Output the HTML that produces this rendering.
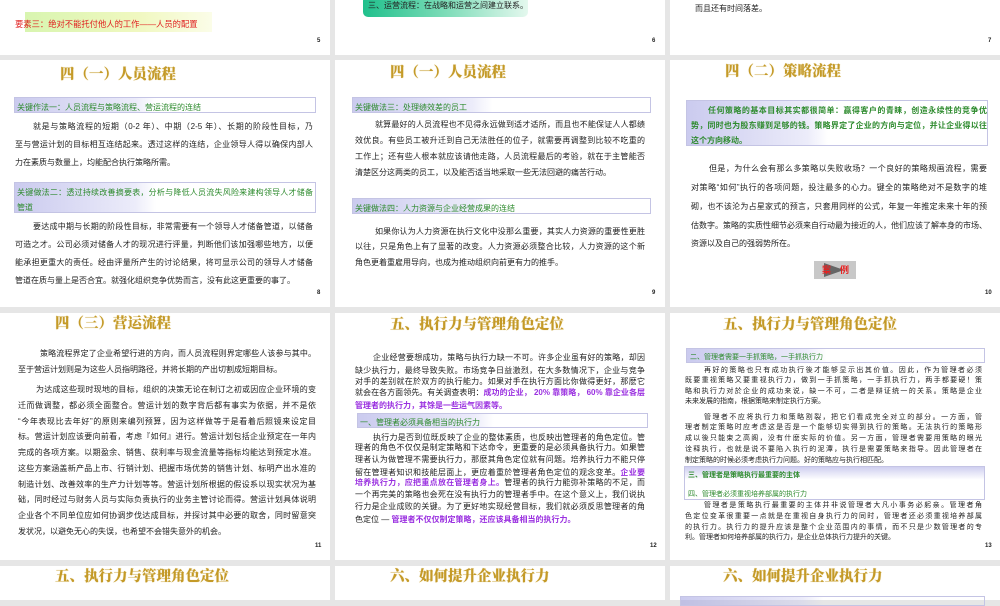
<!DOCTYPE html>
<html><head><meta charset="utf-8">
<style>
*{margin:0;padding:0;box-sizing:border-box}
body{width:1000px;height:600px;overflow:hidden;background:#e6e6e6;position:relative;font-family:"Liberation Sans","Noto Sans CJK SC",sans-serif}
.s{position:absolute;background:#fff}
.t{position:absolute;font-family:"Liberation Serif","Noto Serif CJK SC",serif;font-weight:900;color:#c49a28;font-size:14.5px;line-height:18px;white-space:nowrap;text-shadow:0 0 1px #e8d49a}
.l{position:absolute;font-size:8px;line-height:10px;color:#222;white-space:nowrap;text-align:justify;text-align-last:justify;overflow:hidden}
.e{text-align-last:left}
.sm{font-size:7px}
.g{color:#2e8b2e}
.p{color:#9a30e0}
.box{position:absolute;border:1px solid #c4c4e4;background:linear-gradient(to right,rgba(160,160,225,.55) 0,rgba(200,200,240,.35) 40%,rgba(255,255,255,0) 47%);}
.box2{position:absolute;border:1px solid #c4c4e4;background:linear-gradient(to bottom,rgba(160,160,225,.5),rgba(255,255,255,0) 40%);}
.n{position:absolute;font-size:6px;color:#222;font-weight:bold}
</style></head><body>
<!-- slides -->
<div class="s" style="left:0;top:0;width:330px;height:55px"></div>
<div class="s" style="left:335px;top:0;width:330px;height:55px"></div>
<div class="s" style="left:670px;top:0;width:330px;height:55px"></div>
<div class="s" style="left:0;top:60px;width:330px;height:247px"></div>
<div class="s" style="left:335px;top:60px;width:330px;height:247px"></div>
<div class="s" style="left:670px;top:60px;width:330px;height:247px"></div>
<div class="s" style="left:0;top:313px;width:330px;height:247px"></div>
<div class="s" style="left:335px;top:313px;width:330px;height:247px"></div>
<div class="s" style="left:670px;top:313px;width:330px;height:247px"></div>
<div class="s" style="left:0;top:566px;width:330px;height:34px"></div>
<div class="s" style="left:335px;top:566px;width:330px;height:34px"></div>
<div class="s" style="left:670px;top:566px;width:330px;height:34px"></div>

<!-- row 1 -->
<div style="position:absolute;left:25px;top:12px;width:187px;height:20px;background:linear-gradient(to right,#d8f5b0,#f0f8c0 60%,#fbfde8)"></div>
<div class="l e" style="left:15px;top:19px;color:#e02020;font-size:8.3px">要素三：绝对不能托付他人的工作——人员的配置</div>
<div class="n" style="left:317px;top:38px">5</div>
<div style="position:absolute;left:363px;top:-4px;width:165px;height:21px;border-radius:5px;background:linear-gradient(to right,#20c08c,#7ddcb8 50%,#e4f8ee)"></div>
<div class="l e" style="left:368px;top:1px;color:#222">三、运营流程：在战略和运营之间建立联系。</div>
<div class="n" style="left:652px;top:38px">6</div>
<div class="l e" style="left:695px;top:4px">而且还有时间落差。</div>
<div class="n" style="left:988px;top:38px">7</div>

<!-- slide 8 -->
<div class="t" style="left:60px;top:66px">四（一）人员流程</div>
<div class="box" style="left:14px;top:97px;width:302px;height:16px"></div>
<div class="l e g" style="left:17px;top:103px">关键作法一：人员流程与策略流程、营运流程的连结</div>
<div class="l" style="left:33px;top:122px;width:280px">就是与策略流程的短期（0-2 年）、中期（2-5 年）、长期的阶段性目标，乃</div>
<div class="l" style="left:15px;top:140px;width:298px">至与营运计划的目标相互连结起来。透过这样的连结，企业领导人得以确保内部人</div>
<div class="l e" style="left:15px;top:158px;width:298px">力在素质与数量上，均能配合执行策略所需。</div>
<div class="box" style="left:14px;top:182px;width:302px;height:31px"></div>
<div class="l g" style="left:17px;top:188px;width:296px">关键做法二：透过持续改善摘要表，分析与降低人员流失风险来建构领导人才储备</div>
<div class="l e g" style="left:17px;top:203px">管道</div>
<div class="l" style="left:33px;top:222px;width:280px">要达成中期与长期的阶段性目标，非常需要有一个领导人才储备管道，以储备</div>
<div class="l" style="left:15px;top:240px;width:298px">可造之才。公司必须对储备人才的现况进行评量，判断他们该加强哪些地方，以便</div>
<div class="l" style="left:15px;top:258px;width:298px">能承担更重大的责任。经由评量所产生的讨论结果，将可显示公司的领导人才储备</div>
<div class="l e" style="left:15px;top:276px;width:298px">管道在质与量上是否合宜。就强化组织竞争优势而言，没有此这更重要的事了。</div>
<div class="n" style="left:317px;top:290px">8</div>

<!-- slide 9 -->
<div class="t" style="left:390px;top:64px">四（一）人员流程</div>
<div class="box" style="left:352px;top:97px;width:299px;height:16px"></div>
<div class="l e g" style="left:355px;top:103px">关键做法三：处理绩效差的员工</div>
<div class="l" style="left:375px;top:120px;width:270px">就算最好的人员流程也不见得永远做到适才适所，而且也不能保证人人都绩</div>
<div class="l" style="left:355px;top:136px;width:290px">效优良。有些员工被升迁到自己无法胜任的位子，就需要再调整到比较不吃重的</div>
<div class="l" style="left:355px;top:152px;width:290px">工作上；还有些人根本就应该请他走路，人员流程最后的考验，就在于主管能否</div>
<div class="l e" style="left:355px;top:168px;width:290px">清楚区分这两类的员工，以及能否适当地采取一些无法回避的痛苦行动。</div>
<div class="box" style="left:352px;top:198px;width:299px;height:16px"></div>
<div class="l e g" style="left:355px;top:204px">关键做法四：人力资源与企业经营成果的连结</div>
<div class="l" style="left:375px;top:227px;width:270px">如果你认为人力资源在执行文化中没那么重要，其实人力资源的重要性更胜</div>
<div class="l" style="left:355px;top:242px;width:290px">以往，只是角色上有了显著的改变。人力资源必须整合比较，人力资源的这个新</div>
<div class="l e" style="left:355px;top:258px;width:290px">角色更着重雇用导向，也成为推动组织向前更有力的推手。</div>
<div class="n" style="left:652px;top:290px">9</div>

<!-- slide 10 -->
<div class="t" style="left:725px;top:63px">四（二）策略流程</div>
<div class="box" style="left:686px;top:100px;width:302px;height:46px"></div>
<div class="l g" style="left:708px;top:106px;width:279px;font-weight:bold">任何策略的基本目标其实都很简单：赢得客户的青睐，创造永续性的竞争优</div>
<div class="l g" style="left:691px;top:121px;width:296px;font-weight:bold">势，同时也为股东赚到足够的钱。策略界定了企业的方向与定位，并让企业得以往</div>
<div class="l e g" style="left:691px;top:136px;font-weight:bold">这个方向移动。</div>
<div class="l" style="left:709px;top:164px;width:278px">但是，为什么会有那么多策略以失败收场？一个良好的策略规画流程，需要</div>
<div class="l" style="left:691px;top:183px;width:296px">对策略“如何”执行的各项问题，投注最多的心力。键全的策略绝对不是数字的堆</div>
<div class="l" style="left:691px;top:202px;width:296px">砌，也不该沦为占星家式的预言，只套用同样的公式，年复一年推定未来十年的预</div>
<div class="l" style="left:691px;top:221px;width:296px">估数字。策略的实质性细节必须来自行动最为接近的人，他们应该了解本身的市场、</div>
<div class="l e" style="left:691px;top:239px;width:296px">资源以及自己的强弱势所在。</div>
<div style="position:absolute;left:814px;top:261px;width:42px;height:18px;background:#c8c8c8"></div>
<div style="position:absolute;left:824px;top:263px;width:0;height:0;border-top:7px solid transparent;border-bottom:7px solid transparent;border-left:20px solid #666"></div>
<div style="position:absolute;left:822px;top:264px;font-size:9px;line-height:12px;color:#e82020;font-weight:bold">案</div>
<div style="position:absolute;left:840px;top:264px;font-size:9px;line-height:12px;color:#e82020;font-weight:bold">例</div>
<div class="n" style="left:985px;top:290px">10</div>

<!-- slide 11 -->
<div class="t" style="left:55px;top:315px">四（三）营运流程</div>
<div class="l" style="left:40px;top:349px;width:276px">策略流程界定了企业希望行进的方向，而人员流程则界定哪些人该参与其中。</div>
<div class="l e" style="left:18px;top:365px;width:298px">至于营运计划则是为这些人员指明路径，并将长期的产出切割成短期目标。</div>
<div class="l" style="left:36px;top:385px;width:280px">为达成这些现时现地的目标，组织的决策无论在制订之初或因应企业环境的变</div>
<div class="l" style="left:18px;top:401px;width:298px">迁而做调整，都必须全面整合。营运计划的数字背后都有事实为依据，并不是依</div>
<div class="l" style="left:18px;top:417px;width:298px">“今年表现比去年好”的原则来编列预算，因为这样做等于是看着后照镜来设定目</div>
<div class="l" style="left:18px;top:432px;width:298px">标。营运计划应该要向前看，考虑『如何』进行。营运计划包括企业预定在一年内</div>
<div class="l" style="left:18px;top:448px;width:298px">完成的各项方案。以期盈余、销售、获利率与现金流量等指标均能达到预定水准。</div>
<div class="l" style="left:18px;top:464px;width:298px">这些方案涵盖新产品上市、行销计划、把握市场优势的销售计划、标明产出水准的</div>
<div class="l" style="left:18px;top:480px;width:298px">制造计划、改善效率的生产力计划等等。营运计划所根据的假设系以现实状况为基</div>
<div class="l" style="left:18px;top:495px;width:298px">础，同时经过与财务人员与实际负责执行的业务主管讨论而得。营运计划具体说明</div>
<div class="l" style="left:18px;top:511px;width:298px">企业各个不同单位应如何协调步伐达成目标，并探讨其中必要的取舍，同时留意突</div>
<div class="l e" style="left:18px;top:527px;width:298px">发状况，以避免无心的失误，也希望不会错失意外的机会。</div>
<div class="n" style="left:315px;top:543px">11</div>

<!-- slide 12 -->
<div class="t" style="left:390px;top:316px">五、执行力与管理角色定位</div>
<div class="l" style="left:373px;top:353px;width:272px">企业经营要想成功，策略与执行力缺一不可。许多企业虽有好的策略，却因</div>
<div class="l" style="left:355px;top:366px;width:290px">缺少执行力，最终导致失败。市场竞争日益激烈，在大多数情况下，企业与竞争</div>
<div class="l" style="left:355px;top:377px;width:290px">对手的差别就在於双方的执行能力。如果对手在执行方面比你做得更好，那麽它</div>
<div class="l" style="left:355px;top:388px;width:290px">就会在各方面领先。有关调查表明：<span class="p" style="font-weight:bold">成功的企业， 20% 靠策略， 60% 靠企业各层</span></div>
<div class="l e p" style="left:355px;top:401px;width:290px;font-weight:bold">管理者的执行力，其馀是一些运气因素等。</div>
<div class="box" style="left:357px;top:413px;width:291px;height:15px"></div>
<div class="l e g" style="left:360px;top:418px">一、管理者必须具备相当的执行力</div>
<div class="l" style="left:373px;top:433px;width:272px">执行力是否到位既反映了企业的整体素质，也反映出管理者的角色定位。管</div>
<div class="l" style="left:355px;top:443px;width:290px">理者的角色不仅仅是制定策略和下达命令，更重要的是必须具备执行力。如果管</div>
<div class="l" style="left:355px;top:455px;width:290px">理者认为做管理不需要执行力，那麽其角色定位就有问题。培养执行力不能只停</div>
<div class="l" style="left:355px;top:468px;width:290px">留在管理者知识和技能层面上，更应着重於管理者角色定位的观念变革。<span class="p" style="font-weight:bold">企业要</span></div>
<div class="l" style="left:355px;top:478px;width:290px"><span class="p" style="font-weight:bold">培养执行力，应把重点放在管理者身上。</span>管理者的执行力能弥补策略的不足，而</div>
<div class="l" style="left:355px;top:490px;width:290px">一个再完美的策略也会死在没有执行力的管理者手中。在这个意义上，我们说执</div>
<div class="l" style="left:355px;top:502px;width:290px">行力是企业成败的关键。为了更好地实现经营目标，我们就必须反思管理者的角</div>
<div class="l e" style="left:355px;top:515px;width:290px">色定位 — <span class="p" style="font-weight:bold">管理者不仅仅制定策略，还应该具备相当的执行力。</span></div>
<div class="n" style="left:650px;top:543px">12</div>

<!-- slide 13 -->
<div class="t" style="left:723px;top:316px">五、执行力与管理角色定位</div>
<div class="box" style="left:686px;top:348px;width:299px;height:15px"></div>
<div class="l e g sm" style="left:690px;top:353px">二、管理者需要一手抓策略，一手抓执行力</div>
<div class="l sm" style="left:704px;top:366px;width:278px">再好的策略也只有成功执行後才能够显示出其价值。因此，作为管理者必须</div>
<div class="l sm" style="left:685px;top:376px;width:297px">既要重视策略又要重视执行力，做到一手抓策略，一手抓执行力，两手都要硬！策</div>
<div class="l sm" style="left:685px;top:387px;width:297px">略和执行力对於企业的成功来说，缺一不可，二者是辩证统一的关系。策略是企业</div>
<div class="l e sm" style="left:685px;top:397px;width:297px">未来发展的指南，根据策略来制定执行方案。</div>
<div class="l sm" style="left:704px;top:413px;width:278px">管理者不应将执行力和策略割裂，把它们看成完全对立的部分。一方面，管</div>
<div class="l sm" style="left:685px;top:423px;width:297px">理者制定策略时应考虑这是否是一个能够切实得到执行的策略。无法执行的策略形</div>
<div class="l sm" style="left:685px;top:434px;width:297px">成以後只能束之高阁，没有什麽实际的价值。另一方面，管理者需要用策略的眼光</div>
<div class="l sm" style="left:685px;top:445px;width:297px">诠释执行，也就是说不要陷入执行的泥潭，执行是需要策略来指导。因此管理者在</div>
<div class="l e sm" style="left:685px;top:456px;width:297px">制定策略的时候必须考虑执行力问题。好的策略应与执行相匹配。</div>
<div class="box2" style="left:684px;top:466px;width:301px;height:34px"></div>
<div class="l e g sm" style="left:688px;top:471px;font-weight:bold">三、管理者是策略执行最重要的主体</div>
<div class="l e g sm" style="left:688px;top:490px">四、管理者必须重视培养部属的执行力</div>
<div class="l sm" style="left:704px;top:501px;width:278px">管理者是策略执行最重要的主体并非说管理者大凡小事务必躬亲。管理者角</div>
<div class="l sm" style="left:685px;top:512px;width:297px">色定位变革很重要一点就是在重视自身执行力的同时，管理者还必须重视培养部属</div>
<div class="l sm" style="left:685px;top:523px;width:297px">的执行力。执行力的提升应该是整个企业范围内的事情，而不只是少数管理者的专</div>
<div class="l e sm" style="left:685px;top:533px;width:297px">利。管理者如何培养部属的执行力，是企业总体执行力提升的关键。</div>
<div class="n" style="left:985px;top:543px">13</div>

<!-- row 4 -->
<div class="t" style="left:55px;top:568px">五、执行力与管理角色定位</div>
<div class="t" style="left:390px;top:568px">六、如何提升企业执行力</div>
<div class="t" style="left:723px;top:568px">六、如何提升企业执行力</div>
<div class="box" style="left:680px;top:596px;width:305px;height:10px"></div>
</body></html>
